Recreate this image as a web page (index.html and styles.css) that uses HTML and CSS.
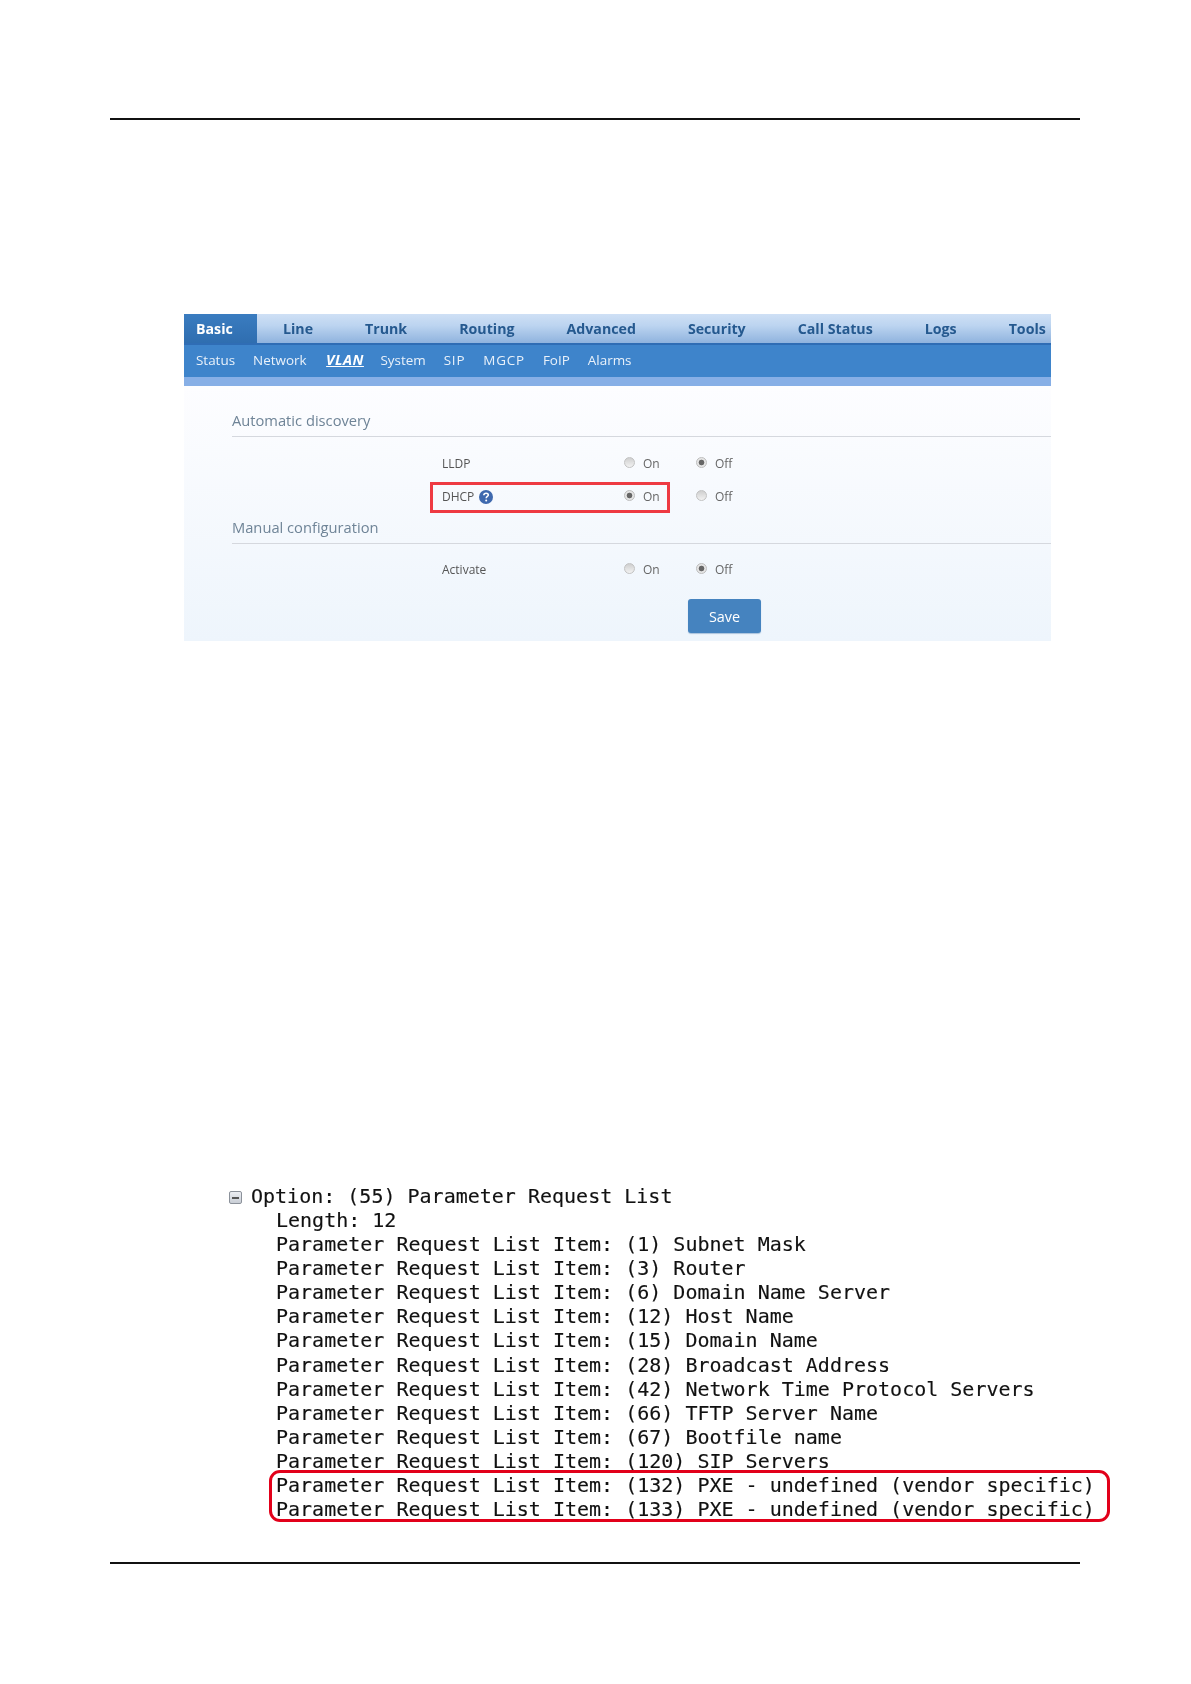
FILE: index.html
```html
<!DOCTYPE html>
<html lang="en">
<head>
<meta charset="utf-8">
<title>VLAN DHCP configuration</title>
<link rel="stylesheet" href="styles.css">
</head>
<body>
<div class="page">
  <hr class="rule top-rule">
  <section class="panel">
    <nav class="tabs">
      <span class="tab active">Basic</span>
      <span class="tab">Line</span>
      <span class="tab">Trunk</span>
      <span class="tab">Routing</span>
      <span class="tab">Advanced</span>
      <span class="tab">Security</span>
      <span class="tab">Call Status</span>
      <span class="tab">Logs</span>
      <span class="tab">Tools</span>
    </nav>
    <nav class="subnav">
      <span>Status</span>
      <span>Network</span>
      <span class="current">VLAN</span>
      <span>System</span>
      <span class="caps">SIP</span>
      <span class="caps">MGCP</span>
      <span>FoIP</span>
      <span>Alarms</span>
    </nav>
    <div class="band"></div>
    <div class="content">
      <h3 class="group first">Automatic discovery</h3>
      <div class="row lldp">
        <span class="label">LLDP</span>
        <span class="opt"><i class="radio"></i>On</span>
        <span class="opt"><i class="radio on"></i>Off</span>
      </div>
      <div class="row dhcp">
        <span class="label">DHCP
          <svg class="help" viewBox="0 0 14 14" width="14" height="14" aria-hidden="true"><circle cx="7" cy="7" r="7" fill="#3f69ae"/><path d="M4.8 5.3C4.9 3.9 5.9 3.2 7.1 3.2 8.4 3.2 9.3 4 9.3 5 9.3 6.5 7.2 6.5 7.2 8.2" fill="none" stroke="#fff" stroke-width="1.6"/><circle cx="7.2" cy="10.4" r="1" fill="#fff"/></svg>
        </span>
        <span class="opt"><i class="radio on"></i>On</span>
        <span class="opt"><i class="radio"></i>Off</span>
        <span class="callout"></span>
      </div>
      <h3 class="group second">Manual configuration</h3>
      <div class="row activate">
        <span class="label">Activate</span>
        <span class="opt"><i class="radio"></i>On</span>
        <span class="opt"><i class="radio on"></i>Off</span>
      </div>
      <div class="actions"><button class="save" type="button">Save</button></div>
    </div>
  </section>
  <section class="capture">
    <div class="line head"><span class="minus"></span>Option: (55) Parameter Request List</div>
    <div class="line">Length: 12</div>
    <div class="line">Parameter Request List Item: (1) Subnet Mask</div>
    <div class="line">Parameter Request List Item: (3) Router</div>
    <div class="line">Parameter Request List Item: (6) Domain Name Server</div>
    <div class="line">Parameter Request List Item: (12) Host Name</div>
    <div class="line">Parameter Request List Item: (15) Domain Name</div>
    <div class="line">Parameter Request List Item: (28) Broadcast Address</div>
    <div class="line">Parameter Request List Item: (42) Network Time Protocol Servers</div>
    <div class="line">Parameter Request List Item: (66) TFTP Server Name</div>
    <div class="line">Parameter Request List Item: (67) Bootfile name</div>
    <div class="line">Parameter Request List Item: (120) SIP Servers</div>
    <div class="marked">
      <div class="line">Parameter Request List Item: (132) PXE - undefined (vendor specific)</div>
      <div class="line">Parameter Request List Item: (133) PXE - undefined (vendor specific)</div>
      <span class="callout-round"></span>
    </div>
  </section>
  <hr class="rule bottom-rule">
</div>
</body>
</html>
```
FILE: styles.css
```css
* { box-sizing: border-box; }
html, body { margin: 0; padding: 0; background: #fff; }
.page { width: 1191px; height: 1684px; padding: 118px 110px 0; }
.rule { margin: 0; border: 0; height: 2px; width: 970px; background: #111; }
.panel {
  margin: 194px 0 0 74px; width: 867px; height: 327px;
  font-family: "Open Sans", "Liberation Sans", sans-serif;
  filter: blur(0.35px);
}
.tabs {
  display: flex; height: 31px;
  border-bottom: 2px solid #2f6db5;
  background: linear-gradient(#cfe0f5 0, #bcd4f0 40%, #8fb3de 100%);
}
.tab {
  flex: none; font-size: 14.2px; font-weight: 700; color: #25598f; line-height: 29px;
  padding: 0 26px; white-space: nowrap;
}
.tab:last-child { padding-right: 0; }
.tab.active {
  width: 73px; padding: 0 0 0 12px; color: #fff;
  background: linear-gradient(#3a7cc0, #2f6eb0);
}
.subnav {
  display: flex; gap: 18px; height: 32px; padding-left: 12px;
  background: #3e84cb; color: #e9f1fa; font-size: 13.45px; line-height: 30px;
}
.subnav .current {
  margin: 0 -1.5px 0 1.5px; color: #fff; font-weight: 700; font-style: italic;
  text-decoration: underline; font-size: 14.4px; letter-spacing: 0.5px;
}
.subnav .caps { letter-spacing: 0.8px; }
.band { height: 9px; background: #87afe6; }
.content {
  position: relative; height: 255px; padding: 22px 0 0 48px;
  background: linear-gradient(#fdfdff, #eef5fc);
}
.group {
  margin: 0; font-size: 14.7px; font-weight: 400; color: #6f8497; line-height: 25px;
  padding-bottom: 3px;
  border-bottom: 1px solid #d5d8de;
}
.second { margin-top: 2px; }
.row {
  position: relative; display: grid; grid-template-columns: 182px 72px 72px;
  padding-left: 210px; height: 33px; align-items: center;
  margin-left: 0; font-size: 12px; color: #555;
}
.lldp { margin-top: 10px; }
.activate { margin-top: 9px; }
.label { display: flex; align-items: center; gap: 4px; }
.help { display: block; margin-left: 1px; }
.opt { display: flex; align-items: center; gap: 8px; color: #666; }
.radio {
  display: block; width: 11px; height: 11px; border-radius: 50%;
  border: 1px solid #c2c2c2; background: linear-gradient(#cfcfcf, #f2f2f2);
  margin-top: -2px;
}
.radio.on { background: radial-gradient(circle, #666 0 2.5px, #e6e6e6 3.2px); border-color: #bdbdbd; }
.callout {
  position: absolute; left: 198px; top: 2px; width: 240px; height: 31px;
  border: 3px solid #ee3a42;
}
.actions { margin: 13px 0 0 456px; }
.save {
  display: block; width: 73px; height: 34px; border: 0; border-radius: 3px;
  background: #4583bf; color: #fff; font: 400 14.4px "Open Sans", sans-serif;
  box-shadow: 0 1px 1px #a9c3dc;
}
.capture {
  margin: 543px 0 0 0; padding-left: 166px;
  font-family: "DejaVu Sans Mono", monospace; font-size: 20px; color: #111;
  -webkit-text-stroke: 0.15px #111;
  filter: blur(0.3px);
}
.line { height: 24.08px; line-height: 24px; white-space: pre; }
.head { position: relative; margin-left: -25px; }
.minus {
  position: absolute; left: -22px; top: 7px; width: 13px; height: 13px;
  border: 1px solid #8b919a; border-radius: 2px; background: linear-gradient(#eceef2, #c9ced6);
}
.minus::after {
  content: ""; position: absolute; left: 2px; right: 2px; top: 5px; height: 1.5px; background: #555;
}
.marked { position: relative; }
.callout-round {
  position: absolute; left: -7px; top: -3px; width: 841px; height: 52px;
  border: 3px solid #e2001a; border-radius: 11px;
}
.bottom-rule { margin-top: 41px; }
```
